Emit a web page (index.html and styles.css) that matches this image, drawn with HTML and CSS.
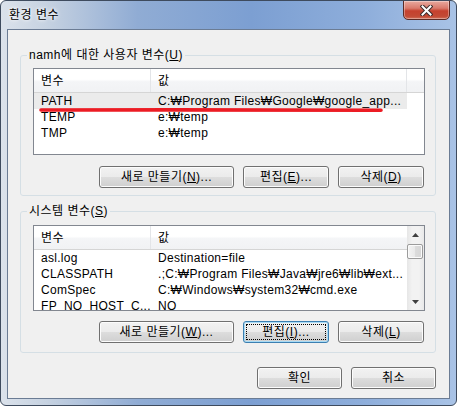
FILE: index.html
```html
<!DOCTYPE html>
<html lang="ko">
<head>
<meta charset="utf-8">
<title>환경 변수</title>
<link rel="stylesheet" href="styles.css">
</head>
<body>
<div class="window">
  <div class="titlebar">
    <span class="title">환경 변수</span>
    <span class="close">
      <svg width="13" height="11" viewBox="0 0 13 11">
        <path d="M2.5 1.5 L10.5 9.5 M10.5 1.5 L2.5 9.5" stroke="#3b2a2a" stroke-width="4" stroke-linecap="square"/>
        <path d="M2.5 1.5 L10.5 9.5 M10.5 1.5 L2.5 9.5" stroke="#ffffff" stroke-width="2" stroke-linecap="square"/>
      </svg>
    </span>
  </div>
  <div class="client">
    <fieldset class="group group-user">
      <legend>namh에 대한 사용자 변수(<u>U</u>)</legend>
      <div class="list list-user">
        <div class="list-main">
          <div class="list-head">
            <span class="c1">변수</span><span class="c2">값</span><span class="c3"></span>
          </div>
          <div class="row sel"><span class="c1">PATH</span><span class="c2">C:₩Program Files₩Google₩google_app...</span></div>
          <div class="row"><span class="c1">TEMP</span><span class="c2">e:₩temp</span></div>
          <div class="row"><span class="c1">TMP</span><span class="c2">e:₩temp</span></div>
        </div>
      </div>
      <div class="btns">
        <button class="btn w-new">새로 만들기(<u>N</u>)...</button>
        <button class="btn w-mid">편집(<u>E</u>)...</button>
        <button class="btn w-mid">삭제(<u>D</u>)</button>
      </div>
    </fieldset>

    <fieldset class="group group-sys">
      <legend>시스템 변수(<u>S</u>)</legend>
      <div class="list list-sys">
        <div class="list-main">
          <div class="list-head">
            <span class="c1">변수</span><span class="c2">값</span>
          </div>
          <div class="row"><span class="c1">asl.log</span><span class="c2">Destination=file</span></div>
          <div class="row"><span class="c1">CLASSPATH</span><span class="c2">.;C:₩Program Files₩Java₩jre6₩lib₩ext...</span></div>
          <div class="row"><span class="c1">ComSpec</span><span class="c2">C:₩Windows₩system32₩cmd.exe</span></div>
          <div class="row"><span class="c1">FP_NO_HOST_C...</span><span class="c2">NO</span></div>
        </div>
        <div class="scrollbar">
          <div class="sb-btn">
            <svg width="7" height="4" viewBox="0 0 7 4"><path d="M0 4 L3.5 0 L7 4 Z" fill="#3f3f3f"/></svg>
          </div>
          <div class="sb-track"><div class="sb-thumb"></div></div>
          <div class="sb-btn">
            <svg width="7" height="4" viewBox="0 0 7 4"><path d="M0 0 L7 0 L3.5 4 Z" fill="#3f3f3f"/></svg>
          </div>
        </div>
      </div>
      <div class="btns">
        <button class="btn w-new">새로 만들기(<u>W</u>)...</button>
        <button class="btn w-mid focus">편집(<u>I</u>)...</button>
        <button class="btn w-mid">삭제(<u>L</u>)</button>
      </div>
    </fieldset>

    <div class="dlg-btns">
      <button class="btn w-ok">확인</button>
      <button class="btn w-ok">취소</button>
    </div>
  </div>
</div>
<svg class="redline" width="457" height="406" viewBox="0 0 457 406">
  <path d="M41 110 C150 109.6 300 110 381 110.2" stroke="#ec1c24" stroke-width="3.6" stroke-linecap="round" fill="none"/>
</svg>
</body>
</html>
```

FILE: styles.css
```css
* { box-sizing: border-box; }

html, body { margin: 0; padding: 0; }

body {
  position: relative;
  width: 457px;
  height: 406px;
  overflow: hidden;
  background: #ffffff;
  color: #000;
  font-family: "Liberation Sans", "DejaVu Sans", "Noto Sans CJK KR", sans-serif;
  font-size: 12px;
  line-height: 14px;
  letter-spacing: 0.5px;
}

.window {
  width: 457px;
  height: 406px;
  border: 1px solid #3e4b5e;
  border-radius: 6px;
  background: linear-gradient(to right, #dbe2eb 0%, #c6d2e1 10%, #90acd4 30%, #7c9fd2 55%, #8eaedb 80%, #a9c3e6 100%);
  display: flex;
  flex-direction: column;
  overflow: hidden;
}

.titlebar {
  height: 28px;
  flex: none;
  display: flex;
  justify-content: space-between;
  align-items: flex-start;
  padding-left: 8px;
}

.title {
  margin-top: 7px;
  text-shadow: 0 0 5px #fff, 0 0 3px #fff;
}

.close {
  width: 47px;
  height: 20px;
  margin-top: -1px;
  margin-right: 6px;
  border: 1px solid #5b2b26;
  border-radius: 0 0 5px 5px;
  background: linear-gradient(#e8a99f 0%, #d97a6c 40%, #c5412e 55%, #c34a35 85%, #d0705a 100%);
  box-shadow: inset 0 0 0 1px rgba(255, 255, 255, 0.35);
  display: flex;
  align-items: center;
  justify-content: center;
}

.client {
  flex: 1;
  margin: 0 6px 6px 6px;
  border: 1px solid #6b7c94;
  background: #f0f0f0;
  display: flex;
  flex-direction: column;
  padding: 0 12px 0 12px;
}

.group {
  margin: 0;
  width: 416px;
  border: 1px solid #d5dfe5;
  border-radius: 3px;
  padding: 6px 10px 7px 12px;
  min-width: 0;
}

.group-user { margin-top: 18px; }
.group-sys { margin-top: 8px; padding-top: 7px; padding-bottom: 9px; }

.group legend {
  margin-left: -6px;
  padding: 0 2px;
  line-height: 14px;
}

.list {
  width: 392px;
  border: 1px solid #828790;
  background: #fff;
  display: flex;
  overflow: hidden;
}

.list-user { height: 87px; }
.list-sys { height: 86px; }

.list-main {
  flex: 1;
  min-width: 0;
}

.list-head {
  height: 24px;
  display: flex;
  align-items: center;
  background: linear-gradient(#ffffff 0%, #ffffff 45%, #f4f5f7 55%, #f1f2f4 100%);
  border-bottom: 1px solid #d5d5d5;
}

.list-head span {
  height: 100%;
  display: flex;
  align-items: center;
}

.list-head .c1 {
  width: 117px;
  padding-left: 7px;
  border-right: 1px solid #e3e5e8;
}

.list-head .c2 {
  width: 256px;
  padding-left: 7px;
  border-right: 1px solid #e3e5e8;
}

.list-sys .list-head .c2 { border-right: none; }

.list-head .c3 { flex: 1; }

.row {
  height: 16px;
  line-height: 16px;
  display: flex;
  width: 373px;
  white-space: nowrap;
  letter-spacing: 0.3px;
}

.row.sel { background: #ebebeb; }

.row .c1 {
  width: 117px;
  padding-left: 7px;
  overflow: hidden;
}

.row .c2 {
  flex: 1;
  padding-left: 7px;
  overflow: hidden;
}

.scrollbar {
  width: 17px;
  flex: none;
  display: flex;
  flex-direction: column;
  background: linear-gradient(to right, #e6e6e6 0%, #f2f2f2 30%, #f2f2f2 70%, #e9e9e9 100%);
}

.sb-btn {
  height: 17px;
  flex: none;
  display: flex;
  align-items: center;
  justify-content: center;
}

.sb-track {
  flex: 1;
  padding: 1px 1px 0 0;
}

.sb-thumb {
  height: 15px;
  border: 1px solid #9c9c9c;
  border-radius: 2px;
  background: linear-gradient(to right, #f4f4f4 0%, #e9e9e9 50%, #dcdcdc 51%, #d6d6d6 100%);
  box-shadow: inset 0 0 0 1px #fbfbfb;
}

.btns {
  margin-top: 11px;
  display: flex;
  justify-content: flex-end;
  gap: 9px;
  padding-right: 1px;
}

.group-sys .btns { margin-top: 10px; }

.btn {
  height: 22px;
  padding: 0;
  border: 1px solid #707070;
  border-radius: 3px;
  background: linear-gradient(#f2f2f2 0%, #ebebeb 50%, #dddddd 51%, #cfcfcf 100%);
  box-shadow: inset 0 0 0 1px #fcfcfc;
  font-family: "Liberation Sans", "DejaVu Sans", "Noto Sans CJK KR", sans-serif;
  font-size: 12px;
  line-height: 14px;
  letter-spacing: 0.5px;
  color: #000;
  position: relative;
}

.btn.focus {
  border-color: #3c7fb1;
  box-shadow: inset 0 0 0 1px #a8dbf5;
}

.btn.focus::after {
  content: "";
  position: absolute;
  inset: 2px;
  border: 1px dotted #000;
}

.w-new { width: 135px; }
.w-mid { width: 86px; }
.w-ok { width: 85px; }

.dlg-btns {
  margin-top: 14px;
  display: flex;
  justify-content: flex-end;
  gap: 9px;
  width: 416px;
}

.redline {
  position: absolute;
  left: 0;
  top: 0;
  pointer-events: none;
}
```
